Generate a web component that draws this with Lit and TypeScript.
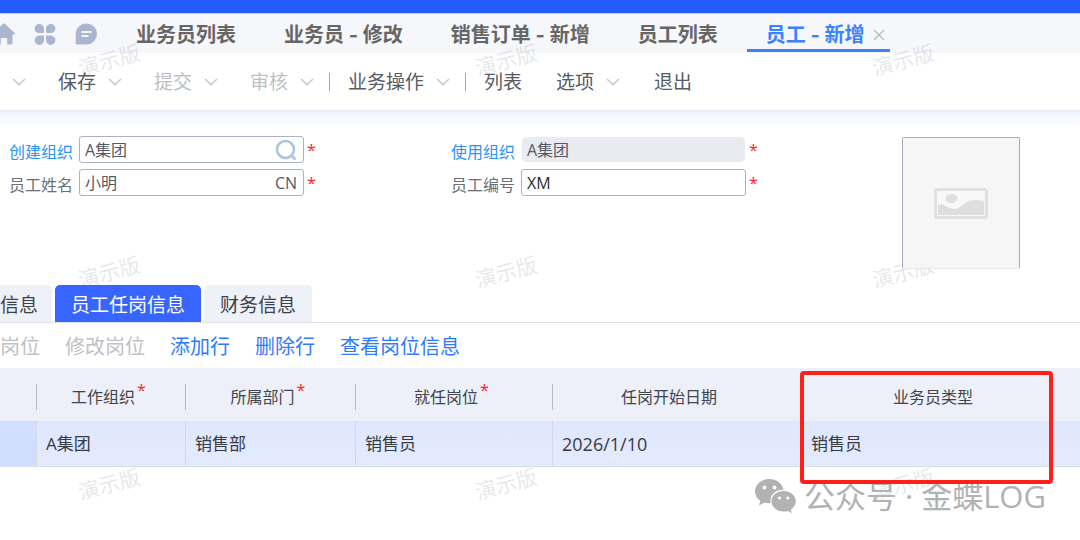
import { LitElement, html, css, svg, nothing } from "lit";
import { customElement, state } from "lit/decorators.js";
import { classMap } from "lit/directives/class-map.js";

interface Command {
  label: string;
  menu?: boolean;
  disabled?: boolean;
}

const pages = ["业务员列表", "业务员 - 修改", "销售订单 - 新增", "员工列表", "员工 - 新增"];

const commandGroups: Command[][] = [
  [
    { label: "", menu: true },
    { label: "保存", menu: true },
    { label: "提交", menu: true, disabled: true },
    { label: "审核", menu: true, disabled: true },
  ],
  [{ label: "业务操作", menu: true }],
  [{ label: "列表" }, { label: "选项", menu: true }, { label: "退出" }],
];

const sections = ["信息", "员工任岗信息", "财务信息"];

const rowActions: Command[] = [
  { label: "岗位", disabled: true },
  { label: "修改岗位", disabled: true },
  { label: "添加行" },
  { label: "删除行" },
  { label: "查看岗位信息" },
];

const columns = [
  { title: "工作组织", required: true },
  { title: "所属部门", required: true },
  { title: "就任岗位", required: true },
  { title: "任岗开始日期", required: false },
  { title: "业务员类型", required: false },
];

const stamps = [60, 272, 484].flatMap((y) => [109, 506, 903].map((x) => ({ x, y })));

const chevron = html`<svg class="chevron" viewBox="0 0 14 8" aria-hidden="true">
  <path d="M1 1l6 5.6L13 1" />
</svg>`;

@customElement("app-root")
export class AppRoot extends LitElement {
  static styles = css`
    :host {
      display: block;
      position: relative;
      min-height: 100vh;
      overflow: hidden;
      background: #fff;
      color: #3f444d;
      font-family: "Open Sans", "Noto Sans CJK SC", sans-serif;
      font-size: 16px;
      line-height: 24px;
    }
    * {
      box-sizing: border-box;
    }
    button,
    input {
      font: inherit;
      color: inherit;
      margin: 0;
      padding: 0;
      border: 0;
      background: none;
    }
    button {
      white-space: nowrap;
    }
    svg {
      display: block;
      flex: none;
    }
    .brand {
      height: 14px;
      background: #255aff;
      border-bottom: 1px solid #c3d1fb;
    }
    .pages {
      display: flex;
      height: 39px;
      background: #f5f7fb;
    }
    .shortcuts {
      display: flex;
      align-items: center;
      width: 117px;
      gap: 17px;
      flex: none;
    }
    .shortcuts button:first-child {
      margin-left: -8px;
    }
    .shortcuts svg {
      width: 24px;
      height: 24px;
      fill: #aab6d0;
    }
    .page {
      display: flex;
      align-items: center;
      height: 38px;
      padding: 6px 5px 0 19px;
      margin-right: 24px;
      font-family: Inter, "Noto Sans CJK SC", sans-serif;
      font-size: 20px;
      font-weight: 700;
      color: #666;
      border-bottom: 3px solid transparent;
    }
    .page.current {
      color: #3b82ff;
      border-color: #3b82ff;
      gap: 9px;
    }
    .close {
      width: 12px;
      height: 12px;
      fill: none;
      stroke: #b3bac7;
      stroke-width: 1.4;
    }
    .commands {
      display: flex;
      align-items: center;
      height: 57px;
      padding-left: 12px;
      font-size: 19px;
      color: #565b64;
    }
    .group {
      display: flex;
      gap: 32px;
    }
    .group + .group {
      margin-left: 15px;
      padding-left: 19px;
      background: linear-gradient(#a5a8ad, #a5a8ad) left center / 1px 18px no-repeat;
    }
    .command {
      display: flex;
      align-items: center;
      gap: 12px;
    }
    .group:last-child {
      gap: 34px;
    }
    .command:disabled {
      color: #bcbfc5;
    }
    .chevron {
      width: 14px;
      height: 8px;
      fill: none;
      stroke: #c6cad3;
      stroke-width: 1.6;
    }
    .shade {
      height: 14px;
      background: linear-gradient(#e8eef8, #f6f8fd 50%, #fafbff);
    }
    .form {
      display: grid;
      grid-template-columns: 442fr 451fr 178fr;
      padding: 12px 0 0 9px;
      height: 161px;
    }
    .fields {
      display: flex;
      flex-direction: column;
      gap: 6px;
    }
    .field {
      display: flex;
      align-items: center;
      height: 27px;
    }
    .field label {
      width: 70px;
      padding-top: 4px;
      color: #6b7078;
      flex: none;
    }
    .field label.link {
      color: #2b93f3;
    }
    .box {
      display: flex;
      align-items: center;
      width: 225px;
      height: 27px;
      padding: 0 6px 0 5px;
      border: 1px solid #a9b2ca;
      border-radius: 3px;
      color: #555a63;
    }
    .box input {
      flex: 1;
      min-width: 0;
      height: 24px;
      outline: 0;
    }
    .box.locked {
      background: #e8ebf0;
      border-color: #fff;
      border-radius: 6px;
    }
    .box.dark {
      color: #2a2d33;
    }
    .search {
      width: 22px;
      height: 22px;
      fill: none;
      stroke: #b0c3dc;
      stroke-width: 2.6;
    }
    .star {
      color: #ff1f1f;
    }
    .field .star {
      margin-left: 3px;
    }
    .photo {
      position: relative;
      z-index: 2;
      display: grid;
      place-items: center;
      width: 118px;
      height: 132px;
      margin-top: 1px;
      background: #f6f6f6;
      border: 1px solid #a2abc0;
      border-bottom-color: #e9e9ec;
      border-radius: 2px;
    }
    .photo svg {
      width: 54px;
      height: 31px;
    }
    .sections {
      position: relative;
      z-index: 2;
      display: flex;
      gap: 3px;
      height: 38px;
      border-bottom: 1px solid #dfe2e8;
      font-size: 19px;
      color: #3d4148;
    }
    .section {
      padding: 3px 16px 0;
      background: #eef1f8;
      border-radius: 5px 5px 0 0;
    }
    .section:first-child {
      padding-left: 0;
      padding-right: 14px;
      border-top-left-radius: 0;
    }
    .section.current {
      background: #3864ff;
      color: #fff;
    }
    .actions {
      display: flex;
      align-items: center;
      gap: 25px;
      height: 45px;
      padding-top: 2px;
      font-size: 20px;
      color: #2f7bff;
    }
    .actions button:disabled {
      color: #bfc1c5;
    }
    .grid {
      position: relative;
    }
    table {
      width: 100%;
      border-collapse: separate;
      border-spacing: 0;
      table-layout: fixed;
    }
    .c0 {
      width: 36px;
    }
    .c1 {
      width: 149px;
    }
    .c2 {
      width: 170px;
    }
    .c3 {
      width: 197px;
    }
    .c4 {
      width: 249px;
    }
    th {
      height: 53px;
      padding: 4px 15px 0 0;
      font-weight: 400;
      background: #edf0f8;
    }
    th.ruled {
      background: linear-gradient(#b7bac2, #b7bac2) left 16px / 1px 26px no-repeat #edf0f8;
    }
    th.ruled:last-child {
      background: #edf0f8;
    }
    .title {
      position: relative;
    }
    .title .star {
      position: absolute;
      left: 100%;
      top: -8px;
      margin-left: 2px;
    }
    td {
      height: 46px;
      padding: 0 0 0 9px;
      font-size: 17px;
      color: #373b42;
      background: linear-gradient(#dfe7fe, #e5ebfe);
      border-bottom: 1px solid #dcdee5;
    }
    td.ruled {
      border-left: 1px solid #d6d9e3;
    }
    td.marker {
      background: #d1deff;
    }
    td.date {
      font-size: 18px;
    }
    td:last-child {
      padding-left: 10px;
    }
    .callout {
      position: absolute;
      z-index: 4;
      left: 800px;
      top: 3px;
      width: 253px;
      height: 113px;
      border: 4px solid #ff2018;
      border-radius: 4px;
      pointer-events: none;
    }
    .account {
      position: absolute;
      z-index: 3;
      right: 34px;
      top: 476px;
      display: flex;
      align-items: center;
      gap: 8px;
      font-size: 31px;
      line-height: 40px;
      color: #b1b2b4;
      white-space: nowrap;
    }
    .account svg {
      width: 41px;
      height: 34px;
    }
    .stamp {
      position: absolute;
      z-index: 1;
      transform: translate(-50%, -50%) rotate(-15deg);
      font-size: 21px;
      line-height: 24px;
      color: rgba(70, 75, 90, 0.15);
      white-space: nowrap;
      pointer-events: none;
    }
  `;

  @state() private page = 4;
  @state() private section = 1;

  private renderCommand(c: Command) {
    return html`<button class="command" ?disabled=${c.disabled} aria-label=${c.label || "更多"}>
      ${c.label || nothing}${c.menu ? chevron : nothing}
    </button>`;
  }

  private renderShortcuts() {
    const shapes = [
      svg`<path d="M11.2 1.8q.8-.7 1.6 0l10 9.2q1 1.2-.4 1.4H20.500v8.600q0 1.500-1.500 1.500h-3.800v-5.500q0-1-1-1h-4.400q-1 0-1 1v5.500H5q-1.500 0-1.500-1.500v-8.600H1.600q-1.400-.2-.4-1.400z"/>`,
      svg`<path d="M6 2a4.800 4.800 0 0 1 5 4.800V11H6.200A4.500 4.500 0 1 1 6 2zM18 2a4.500 4.500 0 1 1-.2 9H13V6.800A4.800 4.800 0 0 1 18 2zM6.200 13.500H11v4.700a4.700 4.700 0 1 1-4.800-4.700zM13 13.500h4.800a4.700 4.700 0 1 1-4.800 4.700z"/>`,
      svg`<path d="M12.500 1.500A10.500 10.500 0 0 1 12.500 22.500H3q-1.300 0-1.300-1.300V12A10.600 10.600 0 0 1 12.500 1.500z"/><path d="M7.500 10h10M7.500 14h7" stroke="#f5f7fb" stroke-width="1.800"/>`,
    ];
    return ["首页", "应用", "消息"].map(
      (name, i) => html`<button aria-label=${name}><svg viewBox="0 0 24 24">${shapes[i]}</svg></button>`
    );
  }

  render() {
    return html`
      <header>
        <div class="brand"></div>
        <nav class="pages">
          <div class="shortcuts">${this.renderShortcuts()}</div>
          ${pages.map(
            (name, i) => html`<button
              class=${classMap({ page: true, current: i === this.page })}
              @click=${() => (this.page = i)}
            >
              ${name}${i === this.page
                ? html`<svg class="close" viewBox="0 0 12 12"><path d="M1 1l10 10M11 1L1 11" /></svg>`
                : nothing}
            </button>`
          )}
        </nav>
        <div class="commands">
          ${commandGroups.map(
            (group) => html`<div class="group">${group.map((c) => this.renderCommand(c))}</div>`
          )}
        </div>
        <div class="shade"></div>
      </header>

      <main>
        <form class="form" @submit=${(e: Event) => e.preventDefault()}>
          <div class="fields">
            <div class="field">
              <label class="link" for="creator">创建组织</label>
              <div class="box">
                <input id="creator" value="A集团" />
                <svg class="search" viewBox="0 0 22 22">
                  <circle cx="10.500" cy="10.500" r="8.500" /><path d="M16.500 16.500l4 4" />
                </svg>
              </div>
              <span class="star">*</span>
            </div>
            <div class="field">
              <label for="name">员工姓名</label>
              <div class="box"><input id="name" value="小明" /><span>CN</span></div>
              <span class="star">*</span>
            </div>
          </div>
          <div class="fields">
            <div class="field">
              <label class="link" for="user">使用组织</label>
              <div class="box locked"><input id="user" value="A集团" readonly /></div>
              <span class="star">*</span>
            </div>
            <div class="field">
              <label for="code">员工编号</label>
              <div class="box dark"><input id="code" value="XM" /></div>
              <span class="star">*</span>
            </div>
          </div>
          <div class="photo">
            <svg viewBox="0 0 54 31" aria-hidden="true">
              <rect x="1.500" y="1.500" width="51" height="28" rx="1.500" fill="#f8f8f8" stroke="#e0e0e0" stroke-width="3" />
              <ellipse cx="17.500" cy="10.500" rx="6" ry="4.500" fill="#dedede" />
              <path d="M4 17c5-3 10 4 16 4 8 0 10-10 22-9 3 0 6 .5 8 1.500V27H4z" fill="#dedede" />
            </svg>
          </div>
        </form>

        <div class="sections">
          ${sections.map(
            (name, i) => html`<button
              class=${classMap({ section: true, current: i === this.section })}
              @click=${() => (this.section = i)}
            >
              ${name}
            </button>`
          )}
        </div>
        <div class="actions">
          ${rowActions.map((a) => html`<button ?disabled=${a.disabled}>${a.label}</button>`)}
        </div>

        <div class="grid">
          <table>
            <colgroup>
              <col class="c0" /><col class="c1" /><col class="c2" /><col class="c3" /><col class="c4" /><col />
            </colgroup>
            <thead>
              <tr>
                <th></th>
                ${columns.map(
                  (c) => html`<th class="ruled" scope="col">
                    <span class="title">${c.title}${c.required ? html`<span class="star">*</span>` : nothing}</span>
                  </th>`
                )}
              </tr>
            </thead>
            <tbody>
              <tr>
                <td class="marker"></td>
                <td class="ruled">A集团</td>
                <td class="ruled">销售部</td>
                <td class="ruled">销售员</td>
                <td class="ruled date">2026/1/10</td>
                <td>销售员</td>
              </tr>
            </tbody>
          </table>
          <div class="callout"></div>
        </div>
      </main>

      ${stamps.map(
        (s) => html`<span class="stamp" style="left:${s.x}px;top:${s.y}px">演示版</span>`
      )}
      <div class="account">
        <svg viewBox="0 0 41 34" aria-hidden="true">
          <path
            fill="#b1b2b4"
            d="M14.500 0C6.500 0 0 5.300 0 12.300c0 4 2 7.300 5.300 9.600L4 26.500l5.400-2.900c1.700.5 3.400.7 5.200.7h1.200C14.200 16.500 20 10.500 28.600 10.700 27 4.300 21.500 0 14.500 0z"
          />
          <path
            fill="#b1b2b4"
            d="M28.700 12c-6.800 0-12.200 4.600-12.200 10.300s5.400 10.300 12.200 10.300c1.500 0 3-.3 4.300-.7l4 2.200-1.100-3.700c3-1.900 4.900-4.800 4.900-8.100C40.800 16.600 35.400 12 28.700 12z"
          />
          <g fill="#fff">
            <circle cx="9.500" cy="8.500" r="1.900" /><circle cx="19.500" cy="8.500" r="1.900" />
            <circle cx="24.500" cy="19" r="1.600" /><circle cx="32.800" cy="19" r="1.600" />
          </g>
        </svg>
        <span>公众号 · 金蝶LOG</span>
      </div>
    `;
  }
}
